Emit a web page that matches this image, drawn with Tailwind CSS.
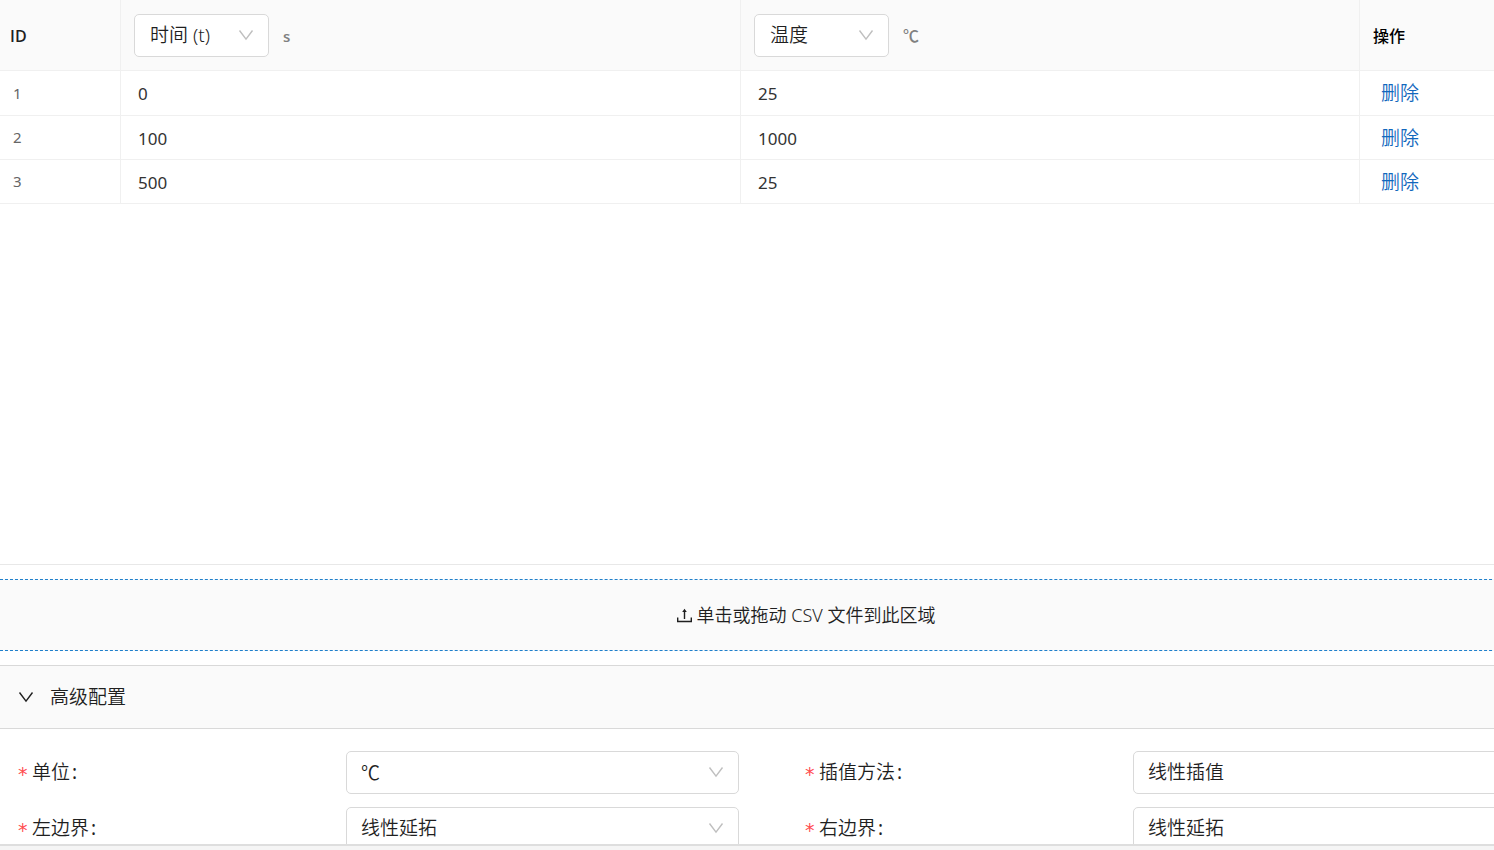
<!DOCTYPE html>
<html lang="zh-CN">
<head>
<meta charset="utf-8">
<meta name="viewport" content="width=device-width, initial-scale=1">
<title>高级配置</title>
<script src="https://cdn.jsdelivr.net/npm/@tailwindcss/browser@4"></script>
</head>
<body class="h-screen overflow-hidden bg-white font-['Noto_Sans','Noto_Sans_CJK_SC',sans-serif] text-[19px] text-[#1f1f1f]">
<svg class="hidden">
  <symbol id="chevron" viewBox="0 0 16 12"><path d="M1.5 1.5 8 10.2 14.5 1.5" fill="none" stroke="currentColor" stroke-width="1.4"/></symbol>
</svg>
<main class="-mr-[118px] flex h-full flex-col overflow-hidden">
  <section class="h-[565px] shrink-0 border-b border-[#e8e8e8]">
    <table class="w-full table-fixed border-separate border-spacing-0 text-left">
      <colgroup><col class="w-[121px]"><col class="w-[620px]"><col class="w-[619px]"><col></colgroup>
      <thead>
        <tr class="h-[71px] bg-[#fafafa]">
          <th class="border-r border-b border-[#f0f0f0] pt-[2px] pl-[10px] font-['Open_Sans'] text-[16px] font-semibold">ID</th>
          <th class="border-r border-b border-[#f0f0f0] pl-[13px] font-normal">
            <div class="flex items-center gap-[14px]">
              <div class="relative w-[135px]">
                <select aria-label="第一列变量" class="h-[43px] w-full appearance-none rounded-[5px] border border-[#d9d9d9] bg-white pt-px pl-[15px] font-[350]"><option>时间 (t)</option></select>
                <svg class="pointer-events-none absolute top-[15px] right-[15px] h-3 w-4 text-[#bfbfbf]"><use href="#chevron"/></svg>
              </div>
              <span class="pt-[2px] font-['Open_Sans'] text-[15px] font-semibold text-[#808080]">s</span>
            </div>
          </th>
          <th class="border-r border-b border-[#f0f0f0] pl-[13px] font-normal">
            <div class="flex items-center gap-[14px]">
              <div class="relative w-[135px]">
                <select aria-label="第二列变量" class="h-[43px] w-full appearance-none rounded-[5px] border border-[#d9d9d9] bg-white pt-px pl-[15px] font-[350]"><option>温度</option></select>
                <svg class="pointer-events-none absolute top-[15px] right-[15px] h-3 w-4 text-[#bfbfbf]"><use href="#chevron"/></svg>
              </div>
              <span class="font-['Noto_Sans_CJK_SC'] text-[16px] font-medium text-[#808080]">℃</span>
            </div>
          </th>
          <th class="border-b border-[#f0f0f0] pt-[2px] pl-[13px] text-[16px] font-medium text-black">操作</th>
        </tr>
      </thead>
      <tbody>
        <tr class="h-[45px]">
          <td class="border-r border-b border-[#f0f0f0] pl-[13px] text-[15px] text-[#666666]">1</td>
          <td class="border-r border-b border-[#f0f0f0] p-0"><input aria-label="时间 1" value="0" class="block h-8 w-full pt-px pl-[17px] text-[17px] text-[#333333]"></td>
          <td class="border-r border-b border-[#f0f0f0] p-0"><input aria-label="温度 1" value="25" class="block h-8 w-full pt-px pl-[17px] text-[17px] text-[#333333]"></td>
          <td class="border-b border-[#f0f0f0] pl-[21px]"><button type="button" class="block font-[350] text-[#1268bd]">删除</button></td>
        </tr>
        <tr class="h-[44px]">
          <td class="border-r border-b border-[#f0f0f0] pl-[13px] text-[15px] text-[#666666]">2</td>
          <td class="border-r border-b border-[#f0f0f0] p-0"><input aria-label="时间 2" value="100" class="block h-8 w-full pt-px pl-[17px] text-[17px] text-[#333333]"></td>
          <td class="border-r border-b border-[#f0f0f0] p-0"><input aria-label="温度 2" value="1000" class="block h-8 w-full pt-px pl-[17px] text-[17px] text-[#333333]"></td>
          <td class="border-b border-[#f0f0f0] pt-px pl-[21px]"><button type="button" class="block font-[350] text-[#1268bd]">删除</button></td>
        </tr>
        <tr class="h-[44px]">
          <td class="border-r border-b border-[#f0f0f0] pl-[13px] text-[15px] text-[#666666]">3</td>
          <td class="border-r border-b border-[#f0f0f0] p-0"><input aria-label="时间 3" value="500" class="block h-8 w-full pt-px pl-[17px] text-[17px] text-[#333333]"></td>
          <td class="border-r border-b border-[#f0f0f0] p-0"><input aria-label="温度 3" value="25" class="block h-8 w-full pt-px pl-[17px] text-[17px] text-[#333333]"></td>
          <td class="border-b border-[#f0f0f0] pt-[2px] pl-[21px]"><button type="button" class="block font-[350] text-[#1268bd]">删除</button></td>
        </tr>
      </tbody>
    </table>
  </section>

  <button type="button" class="mt-[14px] flex h-[72px] w-full shrink-0 items-center justify-center gap-[5px] border-y border-dashed border-[#2080cc] bg-[#fafafa] text-[18px] font-[350]">
    <svg class="mt-px h-[15px] w-[15px]" viewBox="0 0 15 15" fill="none" stroke="currentColor" stroke-width="1.4"><path d="M.7 9.5v4h13.6v-4M7.5 11V3"/><path d="M7.5 .8 9.8 3.9H5.2Z" fill="currentColor" stroke="none"/></svg>
    <span>单击或拖动 CSV 文件到此区域</span>
  </button>

  <button type="button" aria-expanded="true" class="mt-[14px] flex h-[64px] w-full shrink-0 items-center gap-4 border-y border-[#d9d9d9] bg-[#fafafa] pl-[18px] font-[350]">
    <svg class="h-3 w-4"><use href="#chevron"/></svg>
    <span>高级配置</span>
  </button>

  <form class="grid min-h-0 flex-1 grid-cols-2 content-start gap-y-[13px] overflow-hidden pt-[22px] pr-[20px] pl-[18px] font-[350]">
    <div class="grid grid-cols-[10fr_12fr_2fr] items-center">
      <label for="unit" class="flex items-center"><span class="w-[14px] pt-[4px] font-['DejaVu_Sans'] text-[19px] font-normal text-[#ff4d4f]">*</span>单位<span class="ml-[2px] font-normal">:</span></label>
      <div class="relative">
        <select id="unit" class="block h-[43px] w-full appearance-none rounded-[5px] border border-[#d9d9d9] bg-white pl-[14px] font-['Noto_Sans_CJK_SC']"><option>℃</option></select>
        <svg class="pointer-events-none absolute top-[15px] right-[15px] h-3 w-4 text-[#bfbfbf]"><use href="#chevron"/></svg>
      </div>
    </div>
    <div class="grid grid-cols-[10fr_12fr_2fr] items-center">
      <label for="method" class="flex items-center"><span class="w-[14px] pt-[4px] font-['DejaVu_Sans'] text-[19px] font-normal text-[#ff4d4f]">*</span>插值方法<span class="ml-[2px] font-normal">:</span></label>
      <div class="relative">
        <select id="method" class="block h-[43px] w-full appearance-none rounded-[5px] border border-[#d9d9d9] bg-white pl-[14px]"><option>线性插值</option></select>
        <svg class="pointer-events-none absolute top-[15px] right-[15px] h-3 w-4 text-[#bfbfbf]"><use href="#chevron"/></svg>
      </div>
    </div>
    <div class="grid grid-cols-[10fr_12fr_2fr] items-center">
      <label for="left" class="flex items-center"><span class="w-[14px] pt-[4px] font-['DejaVu_Sans'] text-[19px] font-normal text-[#ff4d4f]">*</span>左边界<span class="ml-[2px] font-normal">:</span></label>
      <div class="relative">
        <select id="left" class="block h-[43px] w-full appearance-none rounded-[5px] border border-[#d9d9d9] bg-white pl-[14px]"><option>线性延拓</option></select>
        <svg class="pointer-events-none absolute top-[15px] right-[15px] h-3 w-4 text-[#bfbfbf]"><use href="#chevron"/></svg>
      </div>
    </div>
    <div class="grid grid-cols-[10fr_12fr_2fr] items-center">
      <label for="right" class="flex items-center"><span class="w-[14px] pt-[4px] font-['DejaVu_Sans'] text-[19px] font-normal text-[#ff4d4f]">*</span>右边界<span class="ml-[2px] font-normal">:</span></label>
      <div class="relative">
        <select id="right" class="block h-[43px] w-full appearance-none rounded-[5px] border border-[#d9d9d9] bg-white pl-[14px]"><option>线性延拓</option></select>
        <svg class="pointer-events-none absolute top-[15px] right-[15px] h-3 w-4 text-[#bfbfbf]"><use href="#chevron"/></svg>
      </div>
    </div>
  </form>
  <div class="h-[6px] shrink-0 border-t-2 border-[#dedede] bg-[#f5f5f5]"></div>
</main>
</body>
</html>
